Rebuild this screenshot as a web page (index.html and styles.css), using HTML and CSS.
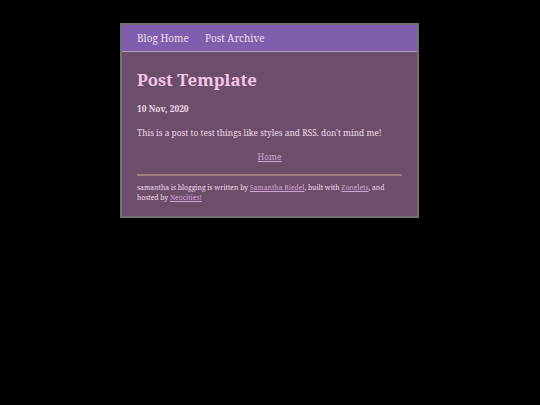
FILE: index.html
```html
<!DOCTYPE html>
<html>
<head>
<meta charset="utf-8">
<link rel="stylesheet" href="styles.css">
</head>
<body>
<div class="page">
  <nav class="nav">
    <a href="#">Blog Home</a>
    <a href="#">Post Archive</a>
  </nav>
  <main class="main">
    <h1 class="title">Post Template</h1>
    <p class="date">10 Nov, 2020</p>
    <p class="body">This is a post to test things like styles and RSS. don't mind me!</p>
    <p class="home"><a href="#">Home</a></p>
    <hr class="rule">
    <footer class="foot">samantha is blogging is written by <a href="#">Samantha Biedel</a>, built with <a href="#">Zonelets</a>, and hosted by <a href="#">Neocities!</a></footer>
  </main>
</div>
</body>
</html>
```
FILE: styles.css
```css
html, body { margin: 0; padding: 0; background: #000; }
body { font-family: "Noto Serif", "DejaVu Serif", serif; color: #f0dcea; }
.page {
  width: 295px;
  margin: 23px 0 0 120px;
  border: 2px solid #727272;
  background: #6e4d6b;
}
.nav {
  background: #7f5fad;
  height: 26px;
  border-bottom: 1px solid #a9a0b4;
  display: flex;
  align-items: center;
  gap: 16px;
  padding-left: 15px;
  font-size: 10px;
}
.nav a { color: #f0dcea; text-decoration: none; }
.main { padding: 18px 15px 12px 15px; }
.title { margin: 0; font-size: 16.8px; font-weight: bold; color: #f2c6e6; line-height: 20px; }
.date { margin: 13.4px 0 0; font-size: 8.4px; font-weight: bold; line-height: 12px; }
.body { margin: 11.7px 0 0; font-size: 8.4px; line-height: 12px; }
.home { margin: 12px 0 0; text-align: center; font-size: 8.4px; line-height: 12px; }
.home a, .foot a { color: #d0a4d8; }
.rule { margin: 11.3px 0 0; border: 0; height: 2px; background: #a07e80; }
.foot { margin-top: 6.5px; font-size: 6.8px; line-height: 10.5px; }
```
